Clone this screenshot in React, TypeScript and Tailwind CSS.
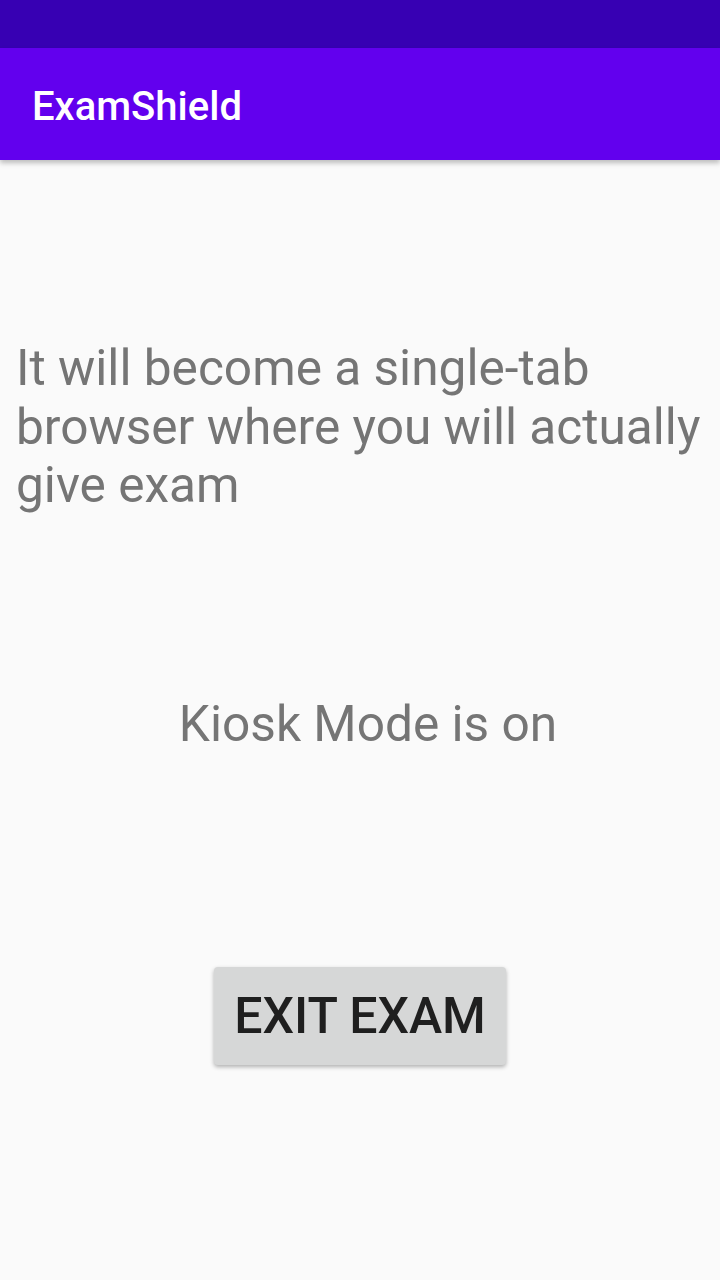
export default function App() {
  return (
    <div
      className="min-h-[1280px] w-[720px] bg-[#fafafa] flex flex-col"
      style={{ fontFamily: "Roboto, 'Noto Sans', sans-serif" }}
    >
      <div className="h-12 bg-[#3700b3]" />
      <header className="h-28 bg-[#6200ee] flex items-center px-8 pt-1 shadow-[0_3px_5px_rgba(0,0,0,0.25)] relative z-10">
        <h1 className="text-[40px] leading-[47px] font-medium text-white">ExamShield</h1>
      </header>

      <main className="flex flex-col pt-[179px]">
        <p className="pl-4 pr-1 text-[49.6px] leading-[58.6px] text-[#757575]">
          It will become a single-tab browser where you will actually give exam
        </p>

        <p className="mt-[180px] pl-4 text-center text-[49.6px] leading-[58.6px] text-[#757575]">
          Kiosk Mode is on
        </p>

        <div className="mt-[214px] flex justify-center">
          <button className="w-[292px] h-[98px] rounded bg-[#d6d7d7] text-[#1f1f1f] text-[50px] font-medium shadow-[0_2px_4px_rgba(0,0,0,0.3)]">
            EXIT EXAM
          </button>
        </div>
      </main>
    </div>
  );
}
